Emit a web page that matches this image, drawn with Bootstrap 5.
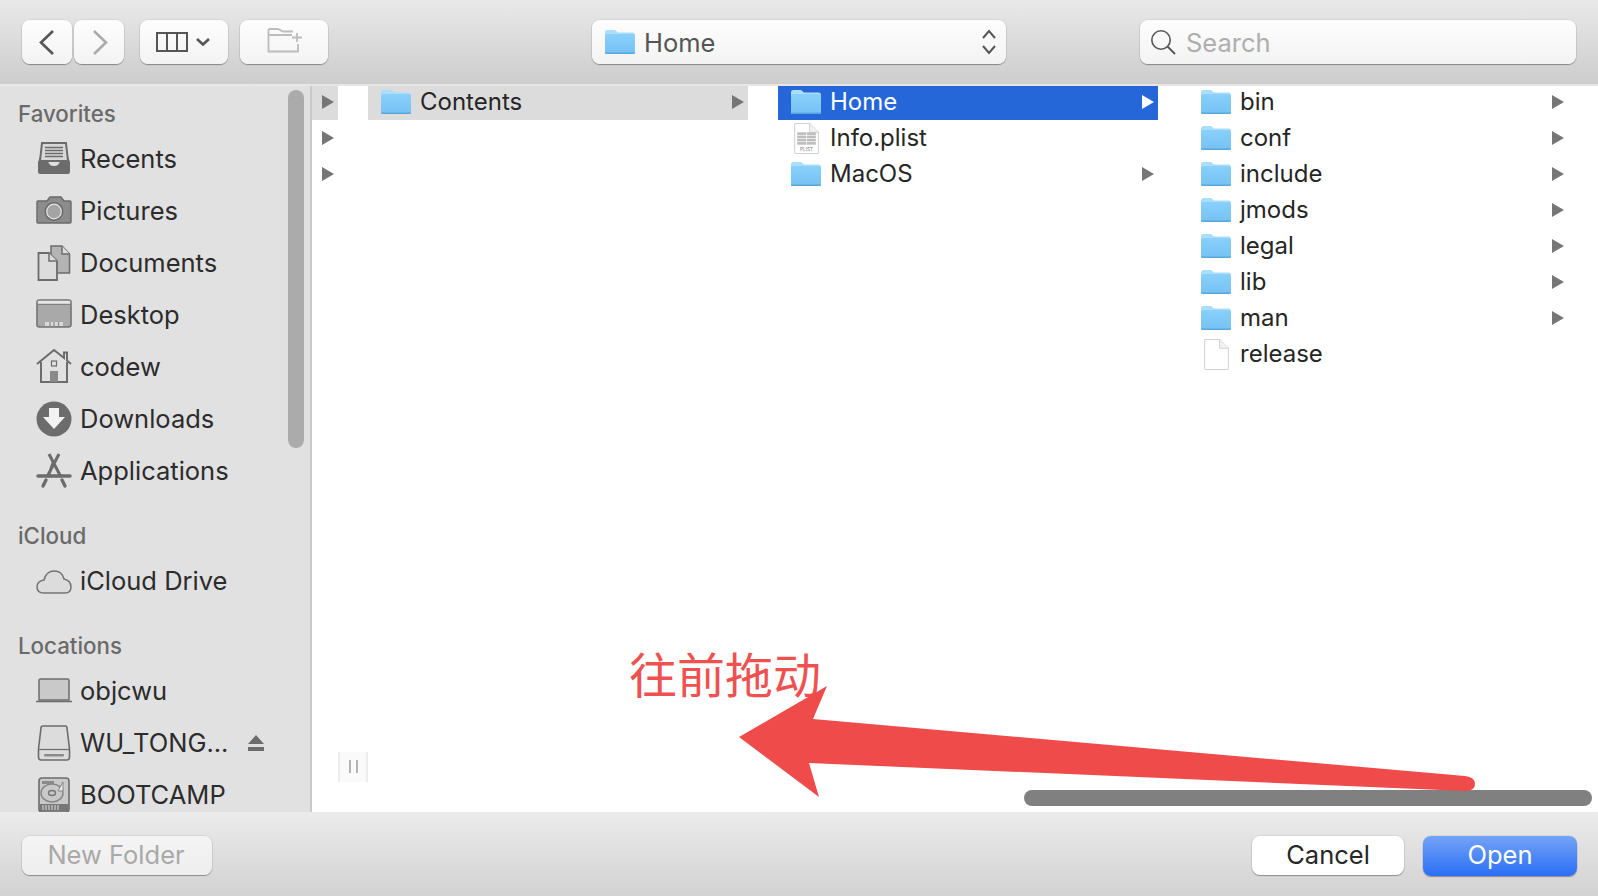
<!DOCTYPE html>
<html lang="en">
<head>
  <meta charset="UTF-8" />
  <title>Open</title>
  <link href="https://cdn.jsdelivr.net/npm/bootstrap@5.3.3/dist/css/bootstrap.min.css" rel="stylesheet" />
  <style>
    html, body { height: 100%; }
    body {
      width: 1598px;
      height: 896px;
      overflow: hidden;
      background: #fff;
      font-family: Inter, "Liberation Sans", sans-serif;
      font-size: 25.5px;
      color: #262626;
      position: relative;
    }
    .top-bar {
      height: 86px;
      padding: 20px 22px 0;
      border-bottom: 2px solid #e7e7e7;
      background: linear-gradient(#e9e9e9, #cdcdcd);
    }
    .mac-btn {
      height: 44px;
      padding: 0;
      border: 0;
      border-radius: 8px;
      background: linear-gradient(#fdfdfd, #f3f3f3);
      box-shadow: 0 1px 1px rgba(0,0,0,.32), 0 0 0 1px rgba(0,0,0,.06);
      font-size: 25.5px;
      color: #262626;
    }
    .mac-btn:hover, .mac-btn:active { background: linear-gradient(#fdfdfd, #f3f3f3); color: #262626; }
    .w-nav { width: 50px; }
    .w-nav + .w-nav { margin-left: 2px; }
    .w-view { width: 88px; margin-left: 16px; }
    .w-new { width: 88px; margin-left: 12px; }
    .path-box { width: 414px; margin-left: 264px; padding: 0 9px 0 13px; color: #555; }
    .find-box { width: 436px; margin-left: 134px; padding: 0 10px; color: #aeaeae; }
    .find-box svg { margin-right: 10px; }
    .path-box svg.folder-ico { margin-right: 9px; }
    .path-box span, .find-box span { padding-top: 2px; }
    .side-pane {
      width: 312px;
      flex: none;
      padding: 9px 0 0 18px;
      background: #e1e1e1;
      border-right: 2px solid #c9c9c9;
      overflow: hidden;
    }
    .group-title { height: 38px; line-height: 38px; font-size: 22.3px; font-weight: 500; color: #6a6a6a; margin-top: 20px; }
    .group-title:first-child { margin-top: 0; }
    .side-row { height: 52px; padding-left: 18px; gap: 8px; color: #2c2c2c; white-space: nowrap; }
    .side-row svg { flex: none; }
    .eject { margin-left: 11px; }
    .browse-pane { gap: 30px; overflow: hidden; }
    .col-strip { width: 26px; flex: none; }
    .col-main { width: 380px; flex: none; }
    .file-row { height: 36px; padding: 0 0 4px 13px; gap: 9px; font-size: 24px; white-space: nowrap; }
    .file-row .row-arrow { margin-left: auto; margin-right: 4px; flex: none; }
    .file-row svg, .strip-row svg { flex: none; }
    .strip-row { height: 36px; padding: 0 0 4px 10px; }
    .row-grey { height: 34px; margin-bottom: 2px; padding-bottom: 2px; background: #dcdcdc; }
    .row-blue { height: 34px; margin-bottom: 2px; padding-bottom: 2px; background: #2566d9; color: #fff; }
    .doc-ico { margin: 0 2px 0 3px; }
    .bottom-bar {
      height: 84px;
      padding: 24px 21px 0 22px;
      background: linear-gradient(#ebebeb, #d2d2d2);
    }
    .bottom-bar .mac-btn { height: 39px; }
    .btn-newf { width: 190px; padding-right: 2px; color: #a9a9a9; background: linear-gradient(#f4f4f4, #eeeeee); }
    .btn-newf:disabled { color: #a9a9a9; background: linear-gradient(#f4f4f4, #eeeeee); opacity: 1; border: 0; }
    .btn-cancel { width: 152px; background: #fff; }
    .btn-cancel:hover { background: #fff; }
    .bottom-bar .btn-open { width: 154px; height: 40px; margin-left: 19px; padding-bottom: 2px; color: #fff; background: linear-gradient(#74a4f6, #2a6ef5); }
    .bottom-bar .btn-open:hover, .bottom-bar .btn-open:active { color: #fff; background: linear-gradient(#74a4f6, #2a6ef5); }
    /* things lying over the panes */
    .side-thumb { position: absolute; left: 288px; top: 90px; width: 16px; height: 358px; border-radius: 8px; background: #ababab; }
    .h-thumb { position: absolute; left: 1024px; top: 790px; width: 568px; height: 16px; border-radius: 8px; background: #808080; }
    .col-handle {
      position: absolute; left: 338px; top: 752px; width: 30px; height: 30px;
      background: #fafafa; border-left: 2px solid #ececec; border-right: 2px solid #ececec;
    }
    .col-handle::before, .col-handle::after { content: ""; position: absolute; top: 8px; width: 2px; height: 13px; background: #b4b4b4; }
    .col-handle::before { left: 9px; }
    .col-handle::after { left: 16px; }
    .note-text {
      position: absolute; left: 629px; top: 637px;
      font-family: "Noto Sans CJK SC", sans-serif; font-size: 48px; line-height: 70px;
      font-weight: 400; color: #ef5050; white-space: nowrap;
    }
    .note-arrow { position: absolute; left: 0; top: 0; pointer-events: none; }
  </style>
</head>
<body class="d-flex flex-column">

  <svg width="0" height="0" class="position-absolute">
    <defs>
      <linearGradient id="fbody" x1="0" y1="0" x2="0" y2="1"><stop offset="0" stop-color="#8ad0fa"/><stop offset="1" stop-color="#74c1f5"/></linearGradient>
      <symbol id="i-folder" viewBox="0 0 30 24">
        <path d="M0 2.5Q0 0 2.5 0H10l3 2.5h15Q30 2.5 30 5V22.5Q30 24 28.5 24H1.5Q0 24 0 22.5Z" fill="#a9defc"/>
        <path d="M0 5.5Q0 4 2 4H28Q30 4 30 5.5V22.5Q30 24 28.5 24H1.5Q0 24 0 22.5Z" fill="url(#fbody)"/>
        <path d="M0 22.4H30V22.5Q30 24 28.5 24H1.5Q0 24 0 22.5Z" fill="#5ba6d8"/>
      </symbol>
      <symbol id="i-tri" viewBox="0 0 12 14"><path d="M0 0L12 7L0 14Z"/></symbol>
      <symbol id="i-blank" viewBox="0 0 24 30">
        <path d="M.5 1.5Q.5.5 1.5.5H15L23.5 9V28.5Q23.5 29.5 22.5 29.5H1.5Q.5 29.5.5 28.5Z" fill="#fff" stroke="#d2d2d2"/>
        <path d="M15 .5V9H23.5" fill="#f2f2f2" stroke="#d2d2d2"/>
      </symbol>
      <symbol id="s-recents" viewBox="0 0 36 36">
        <path d="M6 2H30L32 20H4Z" fill="#d8d8d8" stroke="#6c6c6c" stroke-width="2"/>
        <path d="M9 6.5H27M9 9.5H27M9 12.5H27M9 15.5H27" stroke="#6c6c6c" stroke-width="1.3"/>
        <path d="M4 16L2 21V31Q2 33 4 33H32Q34 33 34 31V21L32 16V20H24Q23 25 18 25T12 20H4Z" fill="#6c6c6c"/>
      </symbol>
      <symbol id="s-pictures" viewBox="0 0 36 36">
        <path d="M1 9Q1 8 2 8H11L14 4H25L28 8H34Q35 8 35 9V29Q35 30 34 30H2Q1 30 1 29Z" fill="#8c8c8c" stroke="#6a6a6a" stroke-width="1.4"/>
        <circle cx="18" cy="18.5" r="9.5" fill="#6a6a6a"/>
        <circle cx="18" cy="18.5" r="7.3" fill="#a4a4a4" stroke="#e6e6e6" stroke-width="1.2"/>
      </symbol>
      <symbol id="s-documents" viewBox="0 0 36 36">
        <path d="M15 1H26L33.5 9V28H15Z" fill="#b4b4b4" stroke="#6c6c6c" stroke-width="1.5"/>
        <path d="M26 1V9H33.5" fill="#dedede" stroke="#6c6c6c" stroke-width="1.5"/>
        <path d="M2.5 8H13L21 16V35H2.5Z" fill="#dcdcdc" stroke="#6c6c6c" stroke-width="1.8"/>
        <path d="M13 8V16H21" fill="#dcdcdc" stroke="#6c6c6c" stroke-width="1.5"/>
      </symbol>
      <symbol id="s-desktop" viewBox="0 0 36 36">
        <rect x="1" y="3" width="34" height="27" rx="2.5" fill="#a9a9a9" stroke="#737373" stroke-width="1.6"/>
        <rect x="1.8" y="3.8" width="32.4" height="3.5" fill="#e6e6e6"/>
        <path d="M1.8 7.3H34.2" stroke="#737373" stroke-width="1"/>
        <path d="M9 29V25H27V29Z" fill="#d8d8d8"/>
        <path d="M14 25V29M18 25V29M22.5 25V29" stroke="#8c8c8c" stroke-width="1.2"/>
      </symbol>
      <symbol id="s-home" viewBox="0 0 36 36">
        <path d="M1 15L18 1L28 9V3.5H31V11.5L35 15" fill="none" stroke="#6c6c6c" stroke-width="2"/>
        <path d="M5 13V33H31V13" fill="none" stroke="#6c6c6c" stroke-width="2"/>
        <rect x="15.5" y="12" width="5" height="5" fill="none" stroke="#6c6c6c" stroke-width="1.2"/>
        <rect x="14" y="22" width="8" height="11" fill="#8a8a8a"/>
      </symbol>
      <symbol id="s-downloads" viewBox="0 0 36 36">
        <circle cx="18" cy="18" r="17.5" fill="#6c6c6c"/>
        <path d="M13 7H23V16H29L18 28L7 16H13Z" fill="#f2f2f2"/>
      </symbol>
      <symbol id="s-apps" viewBox="0 0 36 36">
        <path d="M13 1L25 24M23 1L11 24M17 10L12 24" stroke="#6c6c6c" stroke-width="3" fill="none"/>
        <path d="M2 23H34" stroke="#6c6c6c" stroke-width="3.4" stroke-linecap="round"/>
        <path d="M7 33L10 27M29 33L26 27" stroke="#6c6c6c" stroke-width="3.4" stroke-linecap="round"/>
      </symbol>
      <symbol id="s-cloud" viewBox="0 0 36 36">
        <path d="M8 30Q1 30 1 24Q1 18 8 17Q10 8 18.5 8Q26 8 28 16Q35 17.5 35 24Q35 30 29 30Z" fill="#dcdcdc" stroke="#747474" stroke-width="1.5"/>
      </symbol>
      <symbol id="s-laptop" viewBox="0 0 36 36">
        <path d="M3 27V7.5Q3 6 4.5 6H31.5Q33 6 33 7.5V27Z" fill="#c9c9c9" stroke="#6c6c6c" stroke-width="1.5"/>
        <path d="M0 28.5H36" stroke="#6c6c6c" stroke-width="1.5"/>
      </symbol>
      <symbol id="s-drive" viewBox="0 0 36 36">
        <path d="M5 3Q5 1 7 1H29Q31 1 31 3L33.5 24V32Q33.5 35 31 35H5Q2.5 35 2.5 32V24Z" fill="#dcdcdc" stroke="#6c6c6c" stroke-width="1.6"/>
        <path d="M2.5 24.5H33.5" stroke="#6c6c6c" stroke-width="1.2"/>
        <rect x="8" y="29" width="20" height="2.5" rx="1" fill="#8a8a8a"/>
      </symbol>
      <symbol id="s-disk" viewBox="0 0 36 36">
        <rect x="3" y="1" width="30" height="34" rx="3" fill="#c9c9c9" stroke="#6c6c6c" stroke-width="1.6"/>
        <rect x="6" y="4" width="12" height="3" fill="#8a8a8a"/>
        <ellipse cx="16" cy="16" rx="11" ry="9" fill="none" stroke="#858585" stroke-width="1.4"/>
        <ellipse cx="16" cy="16" rx="3.5" ry="2.5" fill="none" stroke="#777" stroke-width="1.4"/>
        <path d="M22 14L27 5L27 14Z" fill="#ececec" stroke="#858585"/>
        <rect x="3.8" y="27" width="28.4" height="7.2" fill="#777"/>
        <path d="M7 28V33M10 28V33M13 28V33M16 28V33M19 28V33M22 28V33" stroke="#d0d0d0" stroke-width="1.2"/>
      </symbol>
    </defs>
  </svg>

  <header class="top-bar d-flex align-items-start flex-shrink-0">
    <button class="btn mac-btn w-nav" aria-label="Back">
      <svg width="50" height="44" viewBox="0 0 50 44"><path d="M31 11L19 22.5L31 34" fill="none" stroke="#555" stroke-width="2.6"/></svg>
    </button>
    <button class="btn mac-btn w-nav" aria-label="Forward">
      <svg width="50" height="44" viewBox="0 0 50 44"><path d="M20 11L32 22.5L20 34" fill="none" stroke="#ababab" stroke-width="2.6"/></svg>
    </button>
    <button class="btn mac-btn w-view" aria-label="View">
      <svg width="88" height="44" viewBox="0 0 88 44"><rect x="17" y="13" width="30" height="18" fill="none" stroke="#555" stroke-width="2"/><path d="M27 13V31M37 13V31" stroke="#555" stroke-width="2"/><path d="M57 19L63 24.500L69 19" fill="none" stroke="#555" stroke-width="2.6"/></svg>
    </button>
    <button class="btn mac-btn w-new" aria-label="New folder">
      <svg width="88" height="44" viewBox="0 0 88 44"><path d="M28.5 9H38L43 11.5H53M28.5 9V31.5H58V24M28.5 15H52" fill="none" stroke="#bcbcbc" stroke-width="1.8"/><path d="M57 13V22M52 17.5H62" stroke="#bcbcbc" stroke-width="1.8"/></svg>
    </button>
    <div class="mac-btn path-box d-flex align-items-center">
      <svg class="folder-ico" width="30" height="24"><use href="#i-folder"/></svg>
      <span>Home</span>
      <svg class="ms-auto" width="16" height="26" viewBox="0 0 16 26"><path d="M2 9L8 2L14 9M2 17L8 24L14 17" fill="none" stroke="#555" stroke-width="2"/></svg>
    </div>
    <div class="mac-btn find-box d-flex align-items-center">
      <svg width="26" height="26" viewBox="0 0 26 26"><circle cx="11" cy="11" r="9.2" fill="none" stroke="#555" stroke-width="1.6"/><path d="M17.5 17.5L25 25" stroke="#555" stroke-width="1.8"/></svg>
      <span>Search</span>
    </div>
  </header>

  <main class="d-flex flex-grow-1 overflow-hidden">
    <nav class="side-pane">
      <div class="group-title">Favorites</div>
      <div class="side-row d-flex align-items-center"><svg width="36" height="36"><use href="#s-recents"/></svg>Recents</div>
      <div class="side-row d-flex align-items-center"><svg width="36" height="36"><use href="#s-pictures"/></svg>Pictures</div>
      <div class="side-row d-flex align-items-center"><svg width="36" height="36"><use href="#s-documents"/></svg>Documents</div>
      <div class="side-row d-flex align-items-center"><svg width="36" height="36"><use href="#s-desktop"/></svg>Desktop</div>
      <div class="side-row d-flex align-items-center"><svg width="36" height="36"><use href="#s-home"/></svg>codew</div>
      <div class="side-row d-flex align-items-center"><svg width="36" height="36"><use href="#s-downloads"/></svg>Downloads</div>
      <div class="side-row d-flex align-items-center"><svg width="36" height="36"><use href="#s-apps"/></svg>Applications</div>
      <div class="group-title">iCloud</div>
      <div class="side-row d-flex align-items-center"><svg width="36" height="36"><use href="#s-cloud"/></svg>iCloud Drive</div>
      <div class="group-title">Locations</div>
      <div class="side-row d-flex align-items-center"><svg width="36" height="36"><use href="#s-laptop"/></svg>objcwu</div>
      <div class="side-row d-flex align-items-center"><svg width="36" height="36"><use href="#s-drive"/></svg>WU_TONG...
        <svg class="eject" width="18" height="18" viewBox="0 0 18 18"><path d="M9 1L17 10H1Z M1 13H17V17H1Z" fill="#6c6c6c"/></svg>
      </div>
      <div class="side-row d-flex align-items-center"><svg width="36" height="36"><use href="#s-disk"/></svg>BOOTCAMP</div>
    </nav>

    <section class="browse-pane d-flex flex-grow-1">
      <div class="col-strip">
        <div class="strip-row row-grey d-flex align-items-center"><svg width="12" height="14" fill="#767676"><use href="#i-tri"/></svg></div>
        <div class="strip-row d-flex align-items-center"><svg width="12" height="14" fill="#767676"><use href="#i-tri"/></svg></div>
        <div class="strip-row d-flex align-items-center"><svg width="12" height="14" fill="#767676"><use href="#i-tri"/></svg></div>
      </div>
      <div class="col-main">
        <div class="file-row row-grey d-flex align-items-center"><svg width="30" height="24"><use href="#i-folder"/></svg>Contents<svg class="row-arrow" width="12" height="14" fill="#767676"><use href="#i-tri"/></svg></div>
      </div>
      <div class="col-main">
        <div class="file-row row-blue d-flex align-items-center"><svg width="30" height="24"><use href="#i-folder"/></svg>Home<svg class="row-arrow" width="12" height="14" fill="#fff"><use href="#i-tri"/></svg></div>
        <div class="file-row d-flex align-items-center">
          <svg class="doc-ico" width="25" height="31" viewBox="0 0 24 30"><use href="#i-blank" width="24" height="30"/><path d="M3 9H21V21H3Z" fill="#bdbdbd"/><path d="M3 12H21M3 15H21M3 18H21M12 9V21" stroke="#f4f4f4" stroke-width=".8"/><text x="12" y="27" font-size="4.5" fill="#777" text-anchor="middle">PLIST</text></svg>
          Info.plist
        </div>
        <div class="file-row d-flex align-items-center"><svg width="30" height="24"><use href="#i-folder"/></svg>MacOS<svg class="row-arrow" width="12" height="14" fill="#767676"><use href="#i-tri"/></svg></div>
      </div>
      <div class="col-main">
        <div class="file-row d-flex align-items-center"><svg width="30" height="24"><use href="#i-folder"/></svg>bin<svg class="row-arrow" width="12" height="14" fill="#767676"><use href="#i-tri"/></svg></div>
        <div class="file-row d-flex align-items-center"><svg width="30" height="24"><use href="#i-folder"/></svg>conf<svg class="row-arrow" width="12" height="14" fill="#767676"><use href="#i-tri"/></svg></div>
        <div class="file-row d-flex align-items-center"><svg width="30" height="24"><use href="#i-folder"/></svg>include<svg class="row-arrow" width="12" height="14" fill="#767676"><use href="#i-tri"/></svg></div>
        <div class="file-row d-flex align-items-center"><svg width="30" height="24"><use href="#i-folder"/></svg>jmods<svg class="row-arrow" width="12" height="14" fill="#767676"><use href="#i-tri"/></svg></div>
        <div class="file-row d-flex align-items-center"><svg width="30" height="24"><use href="#i-folder"/></svg>legal<svg class="row-arrow" width="12" height="14" fill="#767676"><use href="#i-tri"/></svg></div>
        <div class="file-row d-flex align-items-center"><svg width="30" height="24"><use href="#i-folder"/></svg>lib<svg class="row-arrow" width="12" height="14" fill="#767676"><use href="#i-tri"/></svg></div>
        <div class="file-row d-flex align-items-center"><svg width="30" height="24"><use href="#i-folder"/></svg>man<svg class="row-arrow" width="12" height="14" fill="#767676"><use href="#i-tri"/></svg></div>
        <div class="file-row d-flex align-items-center"><svg class="doc-ico" width="25" height="31"><use href="#i-blank"/></svg>release</div>
      </div>
    </section>
  </main>

  <footer class="bottom-bar d-flex align-items-start flex-shrink-0">
    <button class="btn mac-btn btn-newf" disabled>New Folder</button>
    <button class="btn mac-btn btn-cancel ms-auto">Cancel</button>
    <button class="btn mac-btn btn-open">Open</button>
  </footer>

  <div class="side-thumb"></div>
  <div class="col-handle"></div>
  <div class="h-thumb"></div>
  <div class="note-text">往前拖动</div>
  <svg class="note-arrow" width="1598" height="896" viewBox="0 0 1598 896">
    <path d="M739 737L827 686L813 719L1465 776Q1475 777 1475 784Q1475 791 1465 791L809 763L819 797Z" fill="#ef4b4b"/>
  </svg>

</body>
</html>
